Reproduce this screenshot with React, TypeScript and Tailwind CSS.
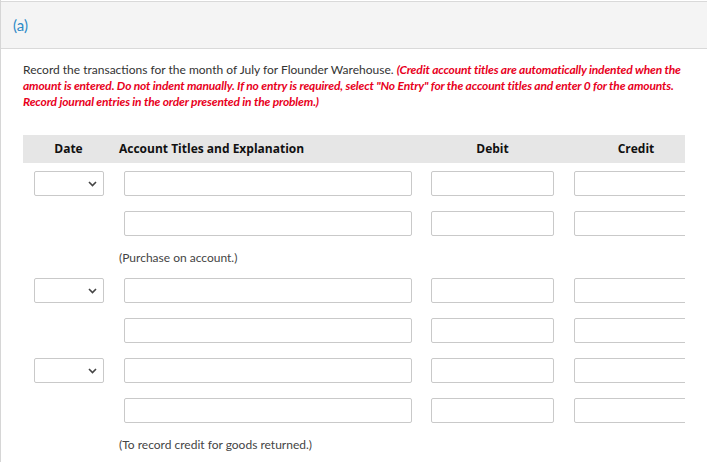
import React from "react";

const rows = [
  { id: 1, date: true },
  { id: 2, date: false, note: "(Purchase on account.)" },
  { id: 3, date: true },
  { id: 4, date: false },
  { id: 5, date: true },
  { id: 6, date: false, note: "(To record credit for goods returned.)" },
];

const DateSelect = () => (
  <div className="relative w-[70px] h-[25px]">
    <select className="appearance-none w-full h-full bg-white border border-[#c9c9c9] rounded-[2px] outline-none"></select>
    <svg
      className="absolute right-[7px] top-[10px] pointer-events-none"
      width="9"
      height="6"
      viewBox="0 0 9 6"
    >
      <path d="M1 1 L4.5 4.5 L8 1" fill="none" stroke="#444" strokeWidth="1.6" />
    </svg>
  </div>
);

const Field = ({ w }: { w: string }) => (
  <input
    type="text"
    className={`${w} h-[25px] bg-white border border-[#c9c9c9] rounded-[2px] outline-none`}
  />
);

export default function App() {
  return (
    <div
      className="min-h-[462px] bg-white border-l border-[#d6d6d6] pt-[1px]"
      style={{ fontFamily: "Lato, 'Open Sans', sans-serif" }}
    >
      {/* part header */}
      <div className="h-[48px] bg-[#f4f4f4] border-y border-[#d9d9d9] flex items-center pl-[12px]">
        <span className="text-[15px] text-[#2d8ac7] leading-none">(a)</span>
      </div>

      <div className="pl-[22px]">
        <p className="mt-[13px] w-[665px] text-[12px] leading-[16px] text-[#333]">
          Record the transactions for the month of July for Flounder Warehouse.{" "}
          <span className="text-[#e8001c] font-bold italic tracking-[-0.15px]">
            (Credit account titles are automatically indented when the amount is entered. Do not indent manually. If no
            entry is required, select "No Entry" for the account titles and enter 0 for the amounts. Record journal
            entries in the order presented in the problem.)
          </span>
        </p>

        <div className="mt-[25px] w-[662px] overflow-hidden">
          <div className="w-[685px]">
            <div
              className="h-[28px] bg-[#e6e6e6] flex items-center text-[12px] font-bold text-[#111]"
              style={{ fontFamily: "'Open Sans', sans-serif" }}
            >
              <div className="w-[91px] text-center">Date</div>
              <div className="w-[307px] pl-[5px]">Account Titles and Explanation</div>
              <div className="w-[143px] pl-[10px]">
                <div className="w-[123px] text-center">Debit</div>
              </div>
              <div className="w-[144px] pl-[10px]">
                <div className="w-[124px] text-center">Credit</div>
              </div>
            </div>

            <div className="pt-[8px]">
              {rows.map((r) => (
                <div key={r.id}>
                  <div className="flex h-[25px] mb-[15px]">
                    <div className="w-[91px] pl-[11px]">{r.date && <DateSelect />}</div>
                    <div className="w-[307px] pl-[10px]">
                      <Field w="w-[288px]" />
                    </div>
                    <div className="w-[143px] pl-[10px]">
                      <Field w="w-[123px]" />
                    </div>
                    <div className="w-[144px] pl-[10px]">
                      <Field w="w-[124px]" />
                    </div>
                  </div>
                  {r.note && (
                    <p className="pl-[96px] -mt-[1px] mb-[12px] text-[12px] leading-[16px] text-[#444]">{r.note}</p>
                  )}
                </div>
              ))}
            </div>
          </div>
        </div>
      </div>
    </div>
  );
}
